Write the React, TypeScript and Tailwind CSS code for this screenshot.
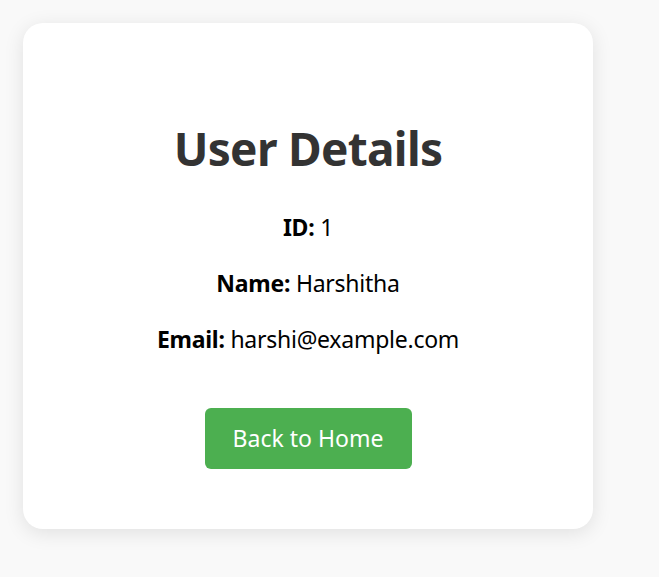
export default function App() {
  return (
    <div className="min-h-screen bg-[#f9f9f9] p-[23px] font-['Noto_Sans',sans-serif]">
      <div className="w-[570px] rounded-[20px] bg-white shadow-[0_4px_20px_rgba(0,0,0,0.1)] pt-[97px] pb-[60px] flex flex-col items-center">
        <h1 className="text-[46px] leading-[56px] font-bold tracking-[-0.7px] text-[#333]">User Details</h1>
        <div className="mt-[35px] flex flex-col items-center gap-[24px] text-[23px] leading-[32px] tracking-[-0.25px] text-black">
          <p>
            <strong>ID:</strong> 1
          </p>
          <p>
            <strong>Name:</strong> Harshitha
          </p>
          <p>
            <strong>Email:</strong> harshi@example.com
          </p>
        </div>
        <button className="mt-[53px] h-[61px] w-[207px] rounded-[6px] bg-[#4caf50] text-white text-[23px]">
          Back to Home
        </button>
      </div>
    </div>
  );
}
